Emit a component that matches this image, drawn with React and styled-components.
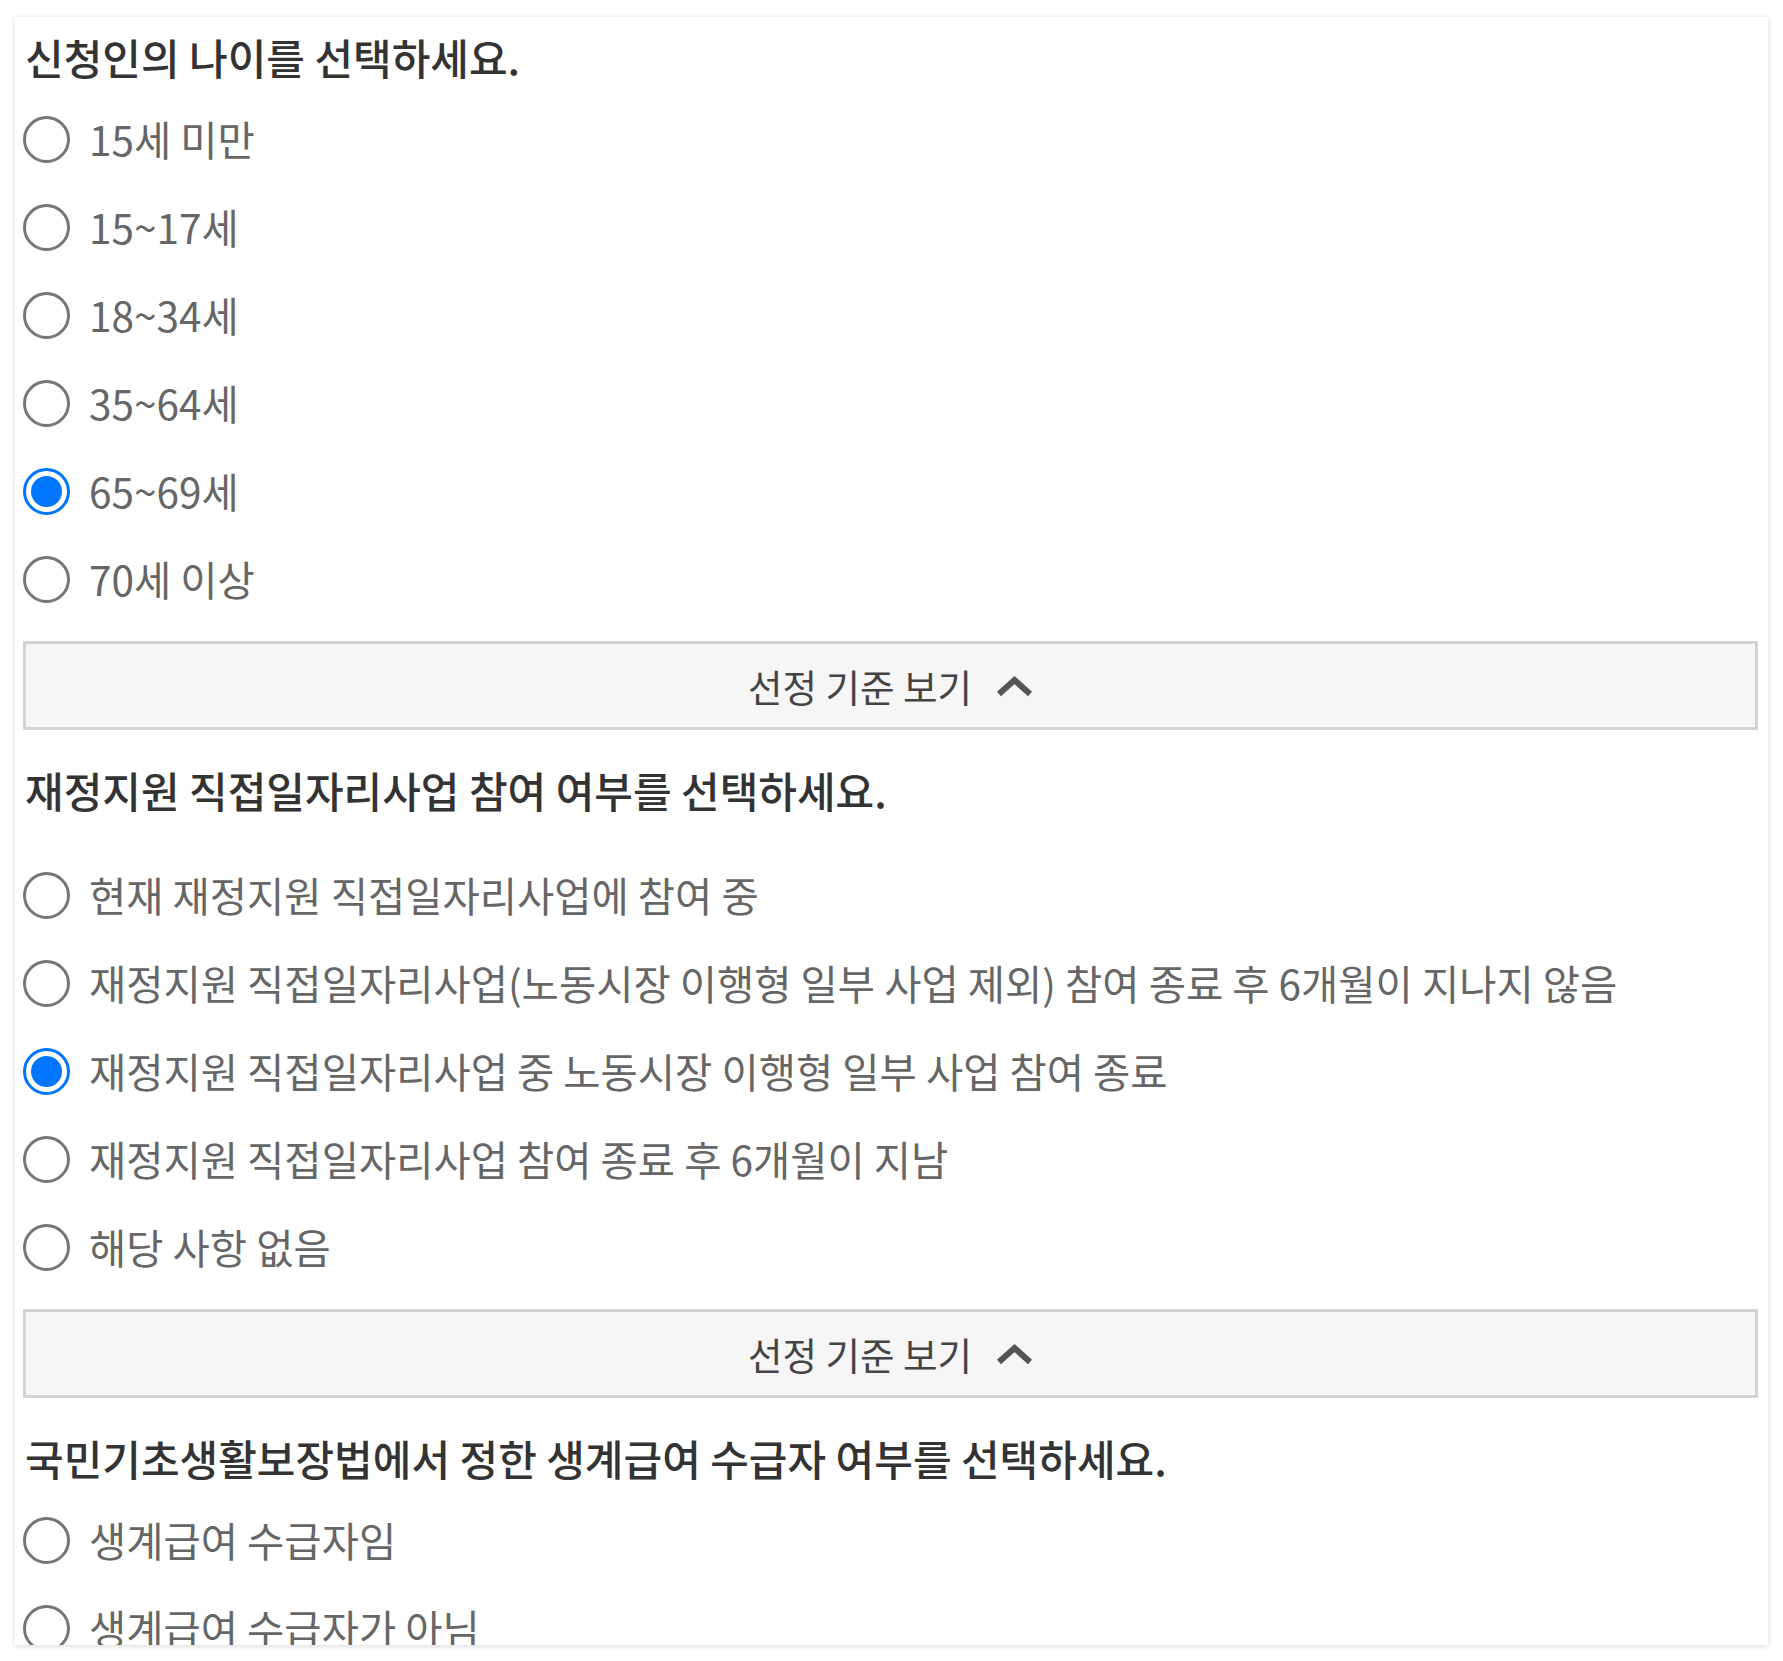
import React from "react";
import styled, { createGlobalStyle } from "styled-components";

const GlobalStyle = createGlobalStyle`
  html, body {
    margin: 0;
    padding: 0;
    background: #ffffff;
  }
  body {
    font-family: "Noto Sans CJK KR", "Noto Sans", sans-serif;
  }
`;

const Page = styled.div`
  padding: 17px 15px 16px;
`;

const Card = styled.div`
  height: 1628px;
  overflow: hidden;
  background: #fff;
  box-shadow: 0 1px 6px rgba(0, 0, 0, 0.16);
  padding: 15px 10px 0 8px;
  box-sizing: border-box;
  display: flex;
  flex-direction: column;
  gap: 35px;
`;

const Section = styled.section`
  display: flex;
  flex-direction: column;
`;

const Title = styled.h2`
  margin: 0 0 ${(p) => (p.$spaced ? "36px" : "13px")};
  padding-left: 2px;
  height: 50px;
  line-height: 50px;
  font-size: 42px;
  font-weight: 500;
  color: #333;
`;

const Options = styled.div`
  display: flex;
  flex-direction: column;
`;

const Option = styled.label`
  display: flex;
  align-items: center;
  height: 88px;
  gap: 19px;
  cursor: pointer;
`;

const Radio = styled.span`
  flex: none;
  width: 47px;
  height: 47px;
  border-radius: 50%;
  box-sizing: border-box;
  border: 3px solid ${(p) => (p.$checked ? "#0075ff" : "#767676")};
  display: flex;
  align-items: center;
  justify-content: center;

  &::after {
    content: "";
    width: 31px;
    height: 31px;
    border-radius: 50%;
    background: #0075ff;
    display: ${(p) => (p.$checked ? "block" : "none")};
  }
`;

const OptionText = styled.span`
  font-size: 40.5px;
  line-height: 50px;
  color: #666;
  white-space: nowrap;
`;

const Toggle = styled.button`
  margin-top: 18px;
  height: 89px;
  width: 100%;
  box-sizing: border-box;
  border: 3px solid #d3d3d3;
  background: #f6f6f6;
  display: flex;
  align-items: center;
  justify-content: center;
  gap: 24px;
  font-family: inherit;
  font-size: 37.5px;
  color: #444;
  cursor: pointer;
`;

const Chevron = () => (
  <svg width="37" height="22" viewBox="0 0 37 22">
    <polyline
      points="3,19 18.5,5 34,19"
      fill="none"
      stroke="#555"
      strokeWidth="6"
      strokeLinejoin="miter"
    />
  </svg>
);

const sections = [
  {
    title: "신청인의 나이를 선택하세요.",
    options: ["15세 미만", "15~17세", "18~34세", "35~64세", "65~69세", "70세 이상"],
    checked: 4,
  },
  {
    title: "재정지원 직접일자리사업 참여 여부를 선택하세요.",
    spaced: true,
    options: [
      "현재 재정지원 직접일자리사업에 참여 중",
      "재정지원 직접일자리사업(노동시장 이행형 일부 사업 제외) 참여 종료 후 6개월이 지나지 않음",
      "재정지원 직접일자리사업 중 노동시장 이행형 일부 사업 참여 종료",
      "재정지원 직접일자리사업 참여 종료 후 6개월이 지남",
      "해당 사항 없음",
    ],
    checked: 2,
  },
  {
    title: "국민기초생활보장법에서 정한 생계급여 수급자 여부를 선택하세요.",
    options: ["생계급여 수급자임", "생계급여 수급자가 아님"],
    checked: -1,
    noToggle: true,
  },
];

export default function App() {
  return (
    <Page>
      <GlobalStyle />
      <Card>
        {sections.map((s, i) => (
          <Section key={i}>
            <Title $spaced={s.spaced}>{s.title}</Title>
            <Options>
              {s.options.map((o, j) => (
                <Option key={j}>
                  <Radio $checked={j === s.checked} />
                  <OptionText>{o}</OptionText>
                </Option>
              ))}
            </Options>
            {!s.noToggle && (
              <Toggle>
                <span>선정 기준 보기</span>
                <Chevron />
              </Toggle>
            )}
          </Section>
        ))}
      </Card>
    </Page>
  );
}
